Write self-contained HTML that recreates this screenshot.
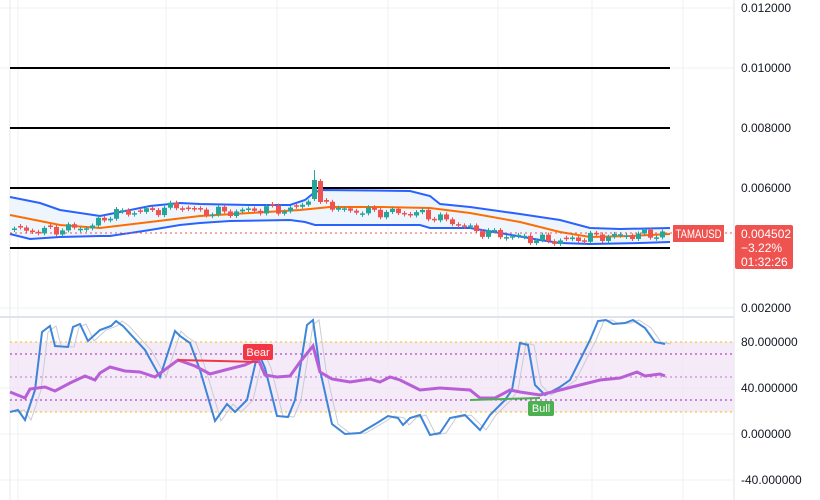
<!DOCTYPE html>
<html><head><meta charset="utf-8"><style>
body{margin:0;width:820px;height:500px;background:#fff;overflow:hidden;font-family:"Liberation Sans",sans-serif}
svg{position:absolute;left:0;top:0}
.ax{font-size:12px;fill:#131722}
</style></head><body>
<svg id="s" width="820" height="500" xmlns="http://www.w3.org/2000/svg">
<g stroke="#eef0f3" stroke-width="1">
<line x1="18" y1="0" x2="18" y2="500"/><line x1="166" y1="0" x2="166" y2="500"/><line x1="277" y1="0" x2="277" y2="500"/><line x1="388" y1="0" x2="388" y2="500"/><line x1="498" y1="0" x2="498" y2="500"/><line x1="592" y1="0" x2="592" y2="500"/><line x1="683" y1="0" x2="683" y2="500"/>
<line x1="0" y1="8" x2="734" y2="8"/><line x1="0" y1="68" x2="734" y2="68"/><line x1="0" y1="308" x2="734" y2="308"/><line x1="0" y1="388" x2="734" y2="388"/><line x1="0" y1="434" x2="734" y2="434"/><line x1="0" y1="480" x2="734" y2="480"/>
</g>
<line x1="10" y1="0" x2="10" y2="500" stroke="#e6e8ec"/>
<line x1="734" y1="0" x2="734" y2="500" stroke="#e0e3eb"/>
<line x1="0" y1="317" x2="734" y2="317" stroke="#e0e3eb" stroke-width="2"/>
<g stroke="#000" stroke-width="2"><line x1="10" y1="68" x2="670" y2="68"/><line x1="10" y1="128" x2="670" y2="128"/><line x1="10" y1="188" x2="670" y2="188"/><line x1="10" y1="248" x2="670" y2="248"/></g>
<path id="band" fill="#eef5fd" stroke="none"/>
<polyline id="up" fill="none" stroke="#2962ff" stroke-width="2"/>
<polyline id="lo" fill="none" stroke="#2962ff" stroke-width="2"/>
<polyline id="mid" fill="none" stroke="#ff6d00" stroke-width="2"/>
<line x1="10" y1="233" x2="734" y2="233" stroke="#ef5350" stroke-dasharray="2,3"/>
<g id="cd"></g>
<rect x="10" y="342" width="724" height="70" fill="#f3e5f5" opacity="0.8"/>
<g stroke-dasharray="2,3"><line x1="10" y1="342" x2="734" y2="342" stroke="#f0c000"/><line x1="10" y1="412" x2="734" y2="412" stroke="#f0c000"/>
<line x1="10" y1="354" x2="734" y2="354" stroke="#9c27b0"/><line x1="10" y1="377" x2="734" y2="377" stroke="#9c27b0" opacity="0.6"/><line x1="10" y1="400" x2="734" y2="400" stroke="#9c27b0"/></g>
<polyline id="st2" fill="none" stroke="#c9ccd4" stroke-width="1"/>
<polyline id="st" fill="none" stroke="#3d85d8" stroke-width="2"/>
<polyline id="rsi" fill="none" stroke="#b85fd8" stroke-width="3"/>
<line x1="178" y1="360" x2="258" y2="362" stroke="#f23645" stroke-width="2"/>
<line x1="470" y1="400" x2="540" y2="398" stroke="#4caf50" stroke-width="2"/>
<rect x="243" y="344" width="30" height="16" rx="2" fill="#f23645"/><text x="258" y="356" font-size="11" fill="#fff" text-anchor="middle">Bear</text>
<rect x="528" y="401" width="26" height="15" rx="2" fill="#4caf50"/><text x="541" y="412" font-size="11" fill="#fff" text-anchor="middle">Bull</text>
<g class="ax"><text x="741" y="12">0.012000</text><text x="741" y="72">0.010000</text><text x="741" y="132">0.008000</text><text x="741" y="192">0.006000</text><text x="741" y="312">0.002000</text>
<text x="741" y="346">80.000000</text><text x="741" y="392">40.000000</text><text x="741" y="438">0.000000</text><text x="741" y="484">-40.000000</text></g>
<rect x="673" y="225" width="51" height="17" fill="#ef5350"/><text x="698.5" y="238" font-size="12" fill="#fff" text-anchor="middle" textLength="46" lengthAdjust="spacingAndGlyphs">TAMAUSD</text>
<rect x="735" y="225" width="58" height="44" rx="2" fill="#ef5350"/>
<text x="741" y="238" font-size="12" fill="#fff">0.004502</text><text x="741" y="252" font-size="12" fill="#fff">−3.22%</text><text x="741" y="266" font-size="12" fill="#fff">01:32:26</text>
</svg>
<script>
function P(a){return a.map(p=>p.join(',')).join(' ')}
function interp(a,x){for(let i=0;i<a.length-1;i++){if(x>=a[i][0]&&x<=a[i+1][0]){let t=(x-a[i][0])/(a[i+1][0]-a[i][0]);return a[i][1]+t*(a[i+1][1]-a[i][1]);}}return a[a.length-1][1];}
var up=[[10,197],[40,203],[60,210],[100,216],[110,214],[150,206],[180,203],[200,204],[250,205],[290,205],[305,200],[315,192],[322,190],[410,191],[430,196],[440,204],[470,207],[520,214],[560,220],[590,228],[620,229],[670,228]];
var lo=[[10,234],[30,239],[60,237],[100,236],[110,236],[150,230],[180,225],[200,223],[230,221],[290,220],[305,222],[315,225],[322,225],[420,225],[430,228],[470,228],[500,233],[540,240],[560,243],[590,244],[640,243],[670,242]];
var mid=[[10,215],[60,225],[100,228],[150,222],[200,216],[250,213],[300,210],[330,207],[380,207],[430,208],[470,213],[520,222],[560,232],[590,237],[630,236],[670,234]];
document.getElementById('up').setAttribute('points',P(up));
document.getElementById('lo').setAttribute('points',P(lo));
document.getElementById('mid').setAttribute('points',P(mid));
document.getElementById('band').setAttribute('d','M'+P(up)+' L'+P(lo.slice().reverse())+'Z');
var cl=[[12,230],[40,231],[60,229],[90,226],[110,213],[150,211],[175,206],[195,212],[230,212],[260,209],[290,210],[300,205],[306,198],[312,190],[318,182],[324,200],[335,210],[380,212],[420,214],[450,222],[470,230],[500,235],[540,240],[560,241],[590,237],[630,235],[665,234]];
var g='',prev=230;
for(var x=12;x<=665;x+=6){var c=interp(cl,x)+Math.sin(x*1.3)*3.5+Math.sin(x*0.37)*2;var o=prev;if(Math.abs(c-o)<1.5)o=c+(Math.sin(x)>0?1.5:-1.5);
var col=c<o?'#26a69a':'#ef5350';var t=Math.min(o,c),b=Math.max(o,c);
var sg=(x>=310&&x<316),sr=(x>=316&&x<322);
if(sg){t=180;b=199;col='#26a69a';}if(sr){t=181;b=202;col='#ef5350';}
g+='<line x1="'+(x+2.5)+'" y1="'+(sg?170:t-2)+'" x2="'+(x+2.5)+'" y2="'+(b+2)+'" stroke="'+col+'"/>';
g+='<rect x="'+x+'" y="'+t+'" width="5" height="'+Math.max(1,b-t)+'" fill="'+col+'"/>';if(!sg&&!sr)prev=c;else prev=200;}
document.getElementById('cd').innerHTML=g;
var st=[[10,412],[18,410],[25,420],[35,390],[42,332],[50,326],[55,346],[68,347],[73,327],[80,324],[88,341],[100,330],[111,326],[116,321],[123,326],[145,350],[160,377],[175,331],[180,336],[190,343],[200,370],[215,421],[227,404],[235,412],[247,400],[258,352],[265,368],[277,416],[288,417],[295,400],[307,325],[313,320],[320,370],[332,424],[345,434],[360,433],[377,423],[388,416],[398,418],[403,425],[410,418],[420,415],[430,435],[440,433],[450,418],[465,415],[480,430],[490,415],[505,400],[512,390],[520,343],[528,345],[535,385],[545,395],[560,387],[570,380],[585,350],[590,340],[598,321],[606,320],[613,324],[625,323],[633,320],[645,328],[655,342],[665,344]];
document.getElementById('st').setAttribute('points',P(st));
document.getElementById('st2').setAttribute('points',P(st.map(p=>[p[0]+6,p[1]])));
var r=[[10,392],[25,398],[30,389],[45,387],[55,391],[70,383],[85,376],[95,380],[100,373],[110,367],[125,371],[140,372],[155,377],[178,360],[195,366],[210,374],[225,370],[245,365],[258,359],[265,375],[277,377],[290,376],[300,362],[313,346],[320,372],[332,379],[350,382],[370,379],[380,382],[390,377],[400,380],[410,385],[420,390],[440,388],[470,390],[480,398],[495,398],[510,390],[520,392],[540,395],[560,390],[580,385],[600,380],[620,378],[637,372],[645,376],[660,374],[665,376]];
document.getElementById('rsi').setAttribute('points',P(r));
</script>
</body></html>
